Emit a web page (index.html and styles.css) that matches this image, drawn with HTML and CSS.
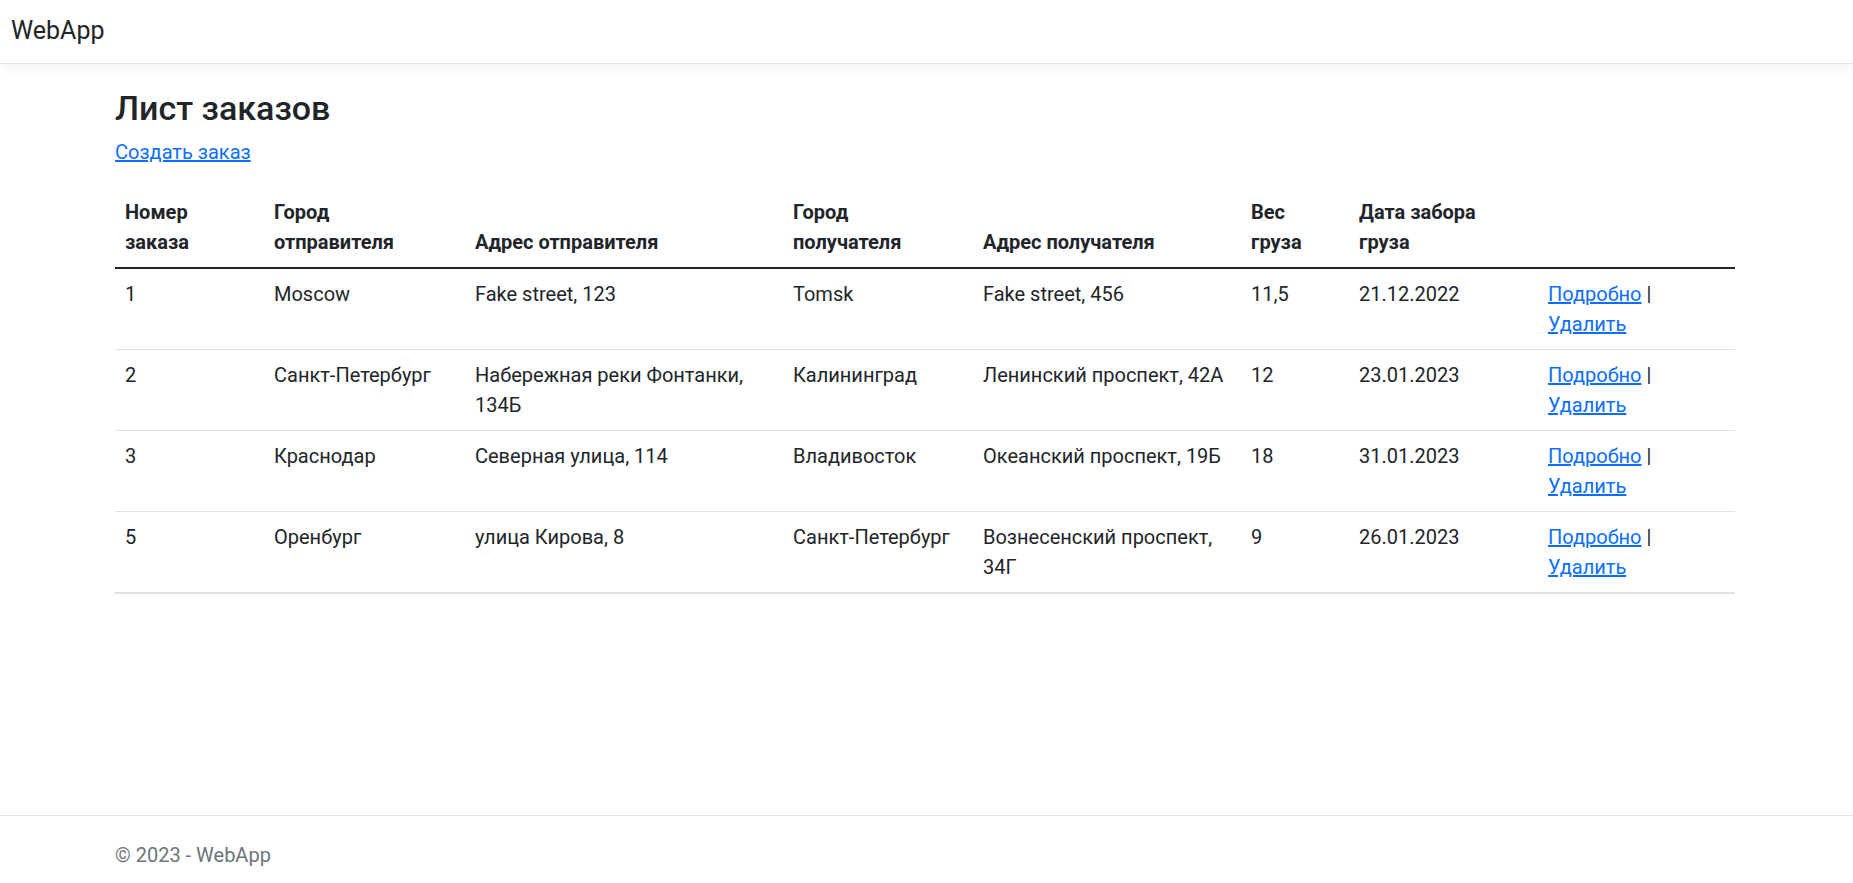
FILE: index.html
```html
<!DOCTYPE html>
<html lang="ru">
<head>
<meta charset="utf-8">
<title>Лист заказов - WebApp</title>
<link rel="stylesheet" href="styles.css">
</head>
<body>
<header class="navbar">
  <a class="brand" href="#">WebApp</a>
</header>
<main class="main">
  <div class="container">
    <h2 class="title">Лист заказов</h2>
    <p class="create"><a href="#">Создать заказ</a></p>
    <table class="orders">
      <colgroup>
        <col class="c1"><col class="c2"><col class="c3"><col class="c4"><col class="c5"><col class="c6"><col class="c7"><col class="c8">
      </colgroup>
      <thead>
        <tr>
          <th>Номер<br>заказа</th>
          <th>Город<br>отправителя</th>
          <th>Адрес отправителя</th>
          <th>Город<br>получателя</th>
          <th>Адрес получателя</th>
          <th>Вес<br>груза</th>
          <th>Дата забора<br>груза</th>
          <th></th>
        </tr>
      </thead>
      <tbody>
        <tr>
          <td>1</td>
          <td>Moscow</td>
          <td>Fake street, 123</td>
          <td>Tomsk</td>
          <td>Fake street, 456</td>
          <td>11,5</td>
          <td>21.12.2022</td>
          <td><a href="#">Подробно</a> |<br><a href="#">Удалить</a></td>
        </tr>
        <tr>
          <td>2</td>
          <td>Санкт-Петербург</td>
          <td>Набережная реки Фонтанки,<br>134Б</td>
          <td>Калининград</td>
          <td>Ленинский проспект, 42А</td>
          <td>12</td>
          <td>23.01.2023</td>
          <td><a href="#">Подробно</a> |<br><a href="#">Удалить</a></td>
        </tr>
        <tr>
          <td>3</td>
          <td>Краснодар</td>
          <td>Северная улица, 114</td>
          <td>Владивосток</td>
          <td>Океанский проспект, 19Б</td>
          <td>18</td>
          <td>31.01.2023</td>
          <td><a href="#">Подробно</a> |<br><a href="#">Удалить</a></td>
        </tr>
        <tr>
          <td>5</td>
          <td>Оренбург</td>
          <td>улица Кирова, 8</td>
          <td>Санкт-Петербург</td>
          <td>Вознесенский проспект,<br>34Г</td>
          <td>9</td>
          <td>26.01.2023</td>
          <td><a href="#">Подробно</a> |<br><a href="#">Удалить</a></td>
        </tr>
      </tbody>
    </table>
  </div>
</main>
<footer class="footer">
  <div class="container">&copy; 2023 - WebApp</div>
</footer>
</body>
</html>
```

FILE: styles.css
```css
* {
  box-sizing: border-box;
}

html, body {
  margin: 0;
  padding: 0;
}

body {
  font-family: Roboto, "Liberation Sans", sans-serif;
  font-size: 20px;
  line-height: 30px;
  color: #212529;
  background: #fff;
  min-height: 100vh;
  display: flex;
  flex-direction: column;
  overflow: hidden;
}

a {
  color: #0d6efd;
  text-decoration: underline;
}

.navbar {
  height: 64px;
  padding: 12px 11px 0;
  border-bottom: 1px solid #dee2e6;
  box-shadow: 0 5px 15px rgba(0, 0, 0, 0.05);
  background: #fff;
  position: relative;
  z-index: 1;
}

.brand {
  font-size: 25px;
  line-height: 37.5px;
  color: #212529;
  text-decoration: none;
}

.main {
  flex: 1;
  padding-top: 20px;
}

.container {
  width: 1620px;
  margin-left: 115px;
}

.title {
  margin: 0 0 5px;
  font-size: 34px;
  line-height: 48px;
  font-weight: 500;
}

.create {
  margin: 0 0 20px;
}

.orders {
  width: 1620px;
  table-layout: fixed;
  border-collapse: collapse;
  margin: 0;
}

.c1 { width: 149px; }
.c2 { width: 201px; }
.c3 { width: 318px; }
.c4 { width: 190px; }
.c5 { width: 268px; }
.c6 { width: 108px; }
.c7 { width: 189px; }
.c8 { width: 197px; }

.orders th {
  text-align: left;
  font-weight: 700;
  vertical-align: bottom;
  padding: 10px;
  border-bottom: 2px solid #212529;
}

.orders td {
  vertical-align: top;
  padding: 10px;
  border-bottom: 1px solid #dee2e6;
}

.orders tbody tr:last-child td {
  border-bottom-width: 2px;
}

.footer {
  border-top: 1px solid #dee2e6;
  color: #6c757d;
  padding: 24px 0 13px;
  white-space: nowrap;
}
```
